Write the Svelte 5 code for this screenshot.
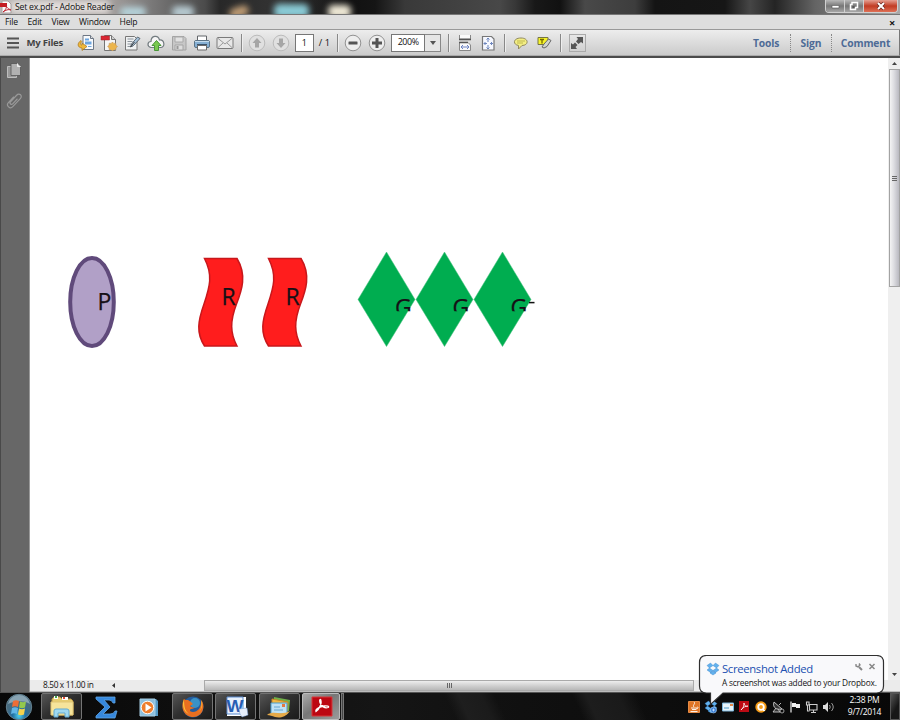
<script>
  const menus = [['File', 22.5], ['Edit', 24], ['View', 27.5], ['Window', 40.5], ['Help', 24]];
  const fileTools = ['open', 'create', 'edit', 'cloud', 'save', 'print', 'mail'];
  const tasks = [
    { icon: 'explorer', on: true }, { icon: 'sigma' }, { icon: 'media' },
    { icon: 'firefox', on: true }, { icon: 'word', on: true },
    { icon: 'live', on: true }, { icon: 'adobe', on: true, active: true }
  ];
  const tray = ['java', 'dropbox', 'mail', 'adobe', 'avast', 'dish', 'flag', 'net', 'sound'];
</script>

{#snippet pdfMark(color)}
  <path d="M4 15c3-2 6-8 5-11-.5-2-2-1-1 2 1 4 5 6 8 5 2-1-1-2-4-1.500-4 .6-9 3-8 5.500z" fill="none" stroke={color} stroke-width="1.300" />
{/snippet}

{#snippet dropMark()}
  <g stroke="#3b87cb" stroke-width=".4" fill="#62b1ee">
    <path d="M1 3.500 4.500 1 7 3.500 3.500 6zM13 3.500 9.500 1 7 3.500 10.500 6zM1 8l2.500-2L7 8.500 4.500 10.500zM13 8l-2.500-2L7 8.500l2.500 2zM4 11l3-2 3 2-3 2z" />
  </g>
{/snippet}

<div class="screen">
  <header class="title">
    <i class="glow a"></i><i class="glow b"></i><i class="glow c"></i><i class="glow d"></i><i class="glow e"></i><i class="glow f"></i>
    <svg width="12" height="14" viewBox="0 0 12 14">
      <path d="M2 1h6l3 3v9H2z" fill="#fafafa" stroke="#a8a0a0" />
      <path d="M0 3h7v4H0z" fill="#c51c22" />
      <path d="M3 12c4-3 4-7 3-8 0 4 3 5 5 6-3-1-5 0-8 2z" fill="none" stroke="#bd2430" />
    </svg>
    <span class="caption">Set ex.pdf - Adobe Reader</span>
    <div class="winbtns">
      <span><svg width="9" height="8"><path d="M1 3.500h7v2.500h-7z" fill="#fff" stroke="#555" stroke-width=".6" /></svg></span>
      <span><svg width="10" height="10"><path d="M3 1.500h5.500v5h-2v2H1.500v-5H3z" fill="none" stroke="#fff" stroke-width="1.500" /><path d="M3.500 5h2v2h-2z" fill="#555" /></svg></span>
      <span class="close"><svg width="10" height="9"><path d="m2 1 6 6M8 1 2 7" stroke="#6a2620" stroke-width="3.400" /><path d="m2 1 6 6M8 1 2 7" stroke="#fff" stroke-width="2" /></svg></span>
    </div>
  </header>

  <nav class="menu">
    {#each menus as [m, w]}<span style="width:{w}px">{m}</span>{/each}
    <b>×</b>
  </nav>

  <div class="toolbar">
    <span class="cell burger"><svg width="12" height="12"><path d="M0 1.500h12M0 6h12M0 10.500h12" stroke="#555" stroke-width="2" /></svg></span>
    <strong class="files">My Files</strong>
    {#each fileTools as t}
      <span class="cell">
        <svg width="18" height="18" viewBox="0 0 18 18">
          {#if t === 'open'}
            <path d="M6 1.500h7.500l3 3v11H6z" fill="#f8fafc" stroke="#6d7785" /><path d="M13.500 1.500v3h3" fill="#ddd" stroke="#6d7785" />
            <path d="M8 4.500h4v2H8zM8 7.500h6.500v3H8zM11 12h3.500v1H11z" fill="#6ca5df" />
            <path d="M4 6.500C0 9 0 13.500 5 14v2.500l5-4-5-3.500v2c-2 0-2-2 0-3.500z" fill="#eeb83b" stroke="#a8731a" stroke-width=".7" />
          {:else if t === 'create'}
            <path d="M4.500 1.500h7l4 4v11h-11z" fill="#f5f5f5" stroke="#747474" /><path d="M11.500 1.500v4h4" fill="#d0d0d0" stroke="#747474" />
            <path d="M1 2h8.500v4H1z" fill="#da2733" stroke="#9d2028" stroke-width=".5" />
            <path d="m12.500 8 1.200 1.400 2-.2.2 2 1.600 1.300-1.500 1.300-.2 2-2-.1-1.300 1.300-1.300-1.300-2 .1-.1-2L7.600 12.500l1.500-1.300.1-2 2 .2z" fill="#ecb54c" stroke="#c2955a" stroke-width=".6" />
          {:else if t === 'edit'}
            <path d="M2.500 2.500h9l2.500 2.500v11H2.500z" fill="#eff1f2" stroke="#777" /><path d="M4.500 5h6M4.500 7.500h5M4.500 10h4M4.500 12.500h5" stroke="#8b939b" />
            <path d="m7.500 13 1-3 6-7 2.500 1.500-6.500 7z" fill="#a6c2da" stroke="#505c68" stroke-width=".9" /><path d="m7.500 13 4-5" stroke="#444" />
          {:else if t === 'cloud'}
            <path d="M4 13.500C-.5 12.500 .5 7.500 4 7.500 4 1.500 11 .5 12.500 6c5-.5 6 7 1.500 7.500z" fill="#f6f6f6" stroke="#737c80" stroke-width="1.200" />
            <path d="m9.500 6.500 4.500 5h-2.500v5h-4v-5H5z" fill="#79c94e" stroke="#499638" />
          {:else if t === 'save'}
            <path d="M2.500 2.500H14l2 2v11.500H2.500z" fill="#c7c7c7" stroke="#a3a3a3" /><path d="M5 3h8v5H5z" fill="#e2e2e2" stroke="#aaa" /><path d="M5 11h8v5H5z" fill="#ddd" stroke="#a5a5a5" /><path d="M6.500 12h2v3h-2z" fill="#999" />
          {:else if t === 'print'}
            <path d="M4.500 2h9v5h-9z" fill="#fff" stroke="#63666a" /><rect x="1.500" y="6.500" width="15" height="7" rx="1.500" fill="#86b0d4" stroke="#5b7386" /><path d="M2 7.500h14" stroke="#c6dcec" />
            <path d="M4 10h10v1.500H4z" fill="#3c536a" /><path d="M4.500 11.500h9V16h-9z" fill="#fff" stroke="#6a6a6a" />
          {:else}
            <rect x="1" y="3.500" width="16" height="11" rx="1" fill="#e7e7e7" stroke="#7a7a7a" /><path d="m1.500 4 7.500 6 7.500-6M1.500 14l5.500-5M16.500 14 11 9" fill="none" stroke="#9a9a9a" />
          {/if}
        </svg>
      </span>
    {/each}
    <i class="sep first"></i>
    {#each [0, 180] as angle}
      <span class="cell"><svg width="18" height="18"><circle cx="9" cy="9" r="7.800" fill="#e0e0e0" stroke="#bbb" /><path d="m9 4 4.500 5H11v4.500H7V9H4.500z" fill="#a6a6a6" transform="rotate({angle} 9 9)" /></svg></span>
    {/each}
    <span class="box page">1</span><span class="of">/ 1</span>
    <i class="sep second"></i>
    <span class="cell"><svg width="18" height="18"><circle cx="9" cy="9" r="7.800" fill="#eee" stroke="#929292" /><rect x="4.500" y="7.500" width="9" height="3" rx=".5" fill="#555" /></svg></span>
    <span class="cell"><svg width="18" height="18"><circle cx="9" cy="9" r="7.800" fill="#eee" stroke="#929292" /><path d="M7.500 4h3v3.500H14v3h-3.500V14h-3v-3.500H4v-3h3.500z" fill="#555" /></svg></span>
    <span class="box zoom">200%</span><span class="drop"><svg width="6" height="4"><path d="M0 0h6L3 4z" fill="#555" /></svg></span>
    <i class="sep third"></i>
    <span class="cell"><svg width="16" height="16"><path d="M2.500 0v4h11V0" fill="#fafafa" stroke="#888" /><path d="M2.500 15.500v-8h8.500l2.500 2.500v5.500z" fill="#fafafa" stroke="#888" /><path d="M2 4.500h12M2 7.500h9" stroke="#555" stroke-width="1.300" /><path d="m6 10-2 2 2 2M10 10l2 2-2 2M4 12h8" fill="none" stroke="#6d83c4" /></svg></span>
    <span class="cell"><svg width="16" height="16"><path d="M2.500 1.500h9l2.500 2.500v11H2.500z" fill="#f6f8ff" stroke="#777" stroke-width="1.200" /><path d="M8 3v4m0 3v4M4 8.500h3m3 0h3M6.500 4.500 8 3l1.500 1.500M6.500 12.500 8 14l1.500-1.500M5.500 7 4 8.500 5.500 10M11 7l1.500 1.500L11 10" fill="none" stroke="#6d86bd" /></svg></span>
    <i class="sep fourth"></i>
    <span class="cell"><svg width="16" height="16"><path d="M8 3c8 0 8 7.500 1 7.500L5.500 14v-3.500C-.500 9.500 0 3 8 3z" fill="#f3ee83" stroke="#918a60" /><path d="M4 6h8M4 8h6" stroke="#c0b951" /></svg></span>
    <span class="cell"><svg width="16" height="16"><path d="M2 2.500h10v7H2z" fill="#f6f329" stroke="#777643" /><path d="M4 4.500h4M6 4.500v4" stroke="#736900" stroke-width="1.300" /><path d="m6 12 2-3 4.500-5 2.500 1.500-4 6-3 1.500z" fill="#d1d6cd" stroke="#666" /></svg></span>
    <i class="sep fifth"></i>
    <span class="full"><svg width="16" height="16"><path d="M7.500 2h6.500v6.500L12 7 9.500 9 7 6.500 9 4zM2 8l2 1.500 2-2L8.500 10l-2 2L8 14H2z" fill="#555" /></svg></span>
    <div class="links"><b>Tools</b><b>Sign</b><b>Comment</b></div>
  </div>

  <main class="body">
    <aside class="side">
      <svg width="16" height="18"><path d="M1.500 4.500h9v11h-9z" fill="#999" stroke="#bdbdbd" /><path d="M5 1.500h6.500l3 3v9H5z" fill="#b1b1b1" stroke="#555" stroke-width=".8" /><path d="M11.500 1.500v3h3" fill="#ddd" stroke="#eee" /></svg>
      <svg width="16" height="18"><g transform="rotate(43 8 9)" fill="none" stroke="#999" stroke-width="1.200"><path d="M5 6v8c0 4 6 4 6 0V3c0-4-5-4-5 0v9c0 2 3 2 3 0V5" /></g></svg>
    </aside>
    <section class="document">
      <div class="row">
        <svg class="sheet" width="858" height="622" viewBox="30 58 858 622">
          <ellipse cx="92" cy="302" rx="21.800" ry="44" fill="#b1a0c7" stroke="#604a7b" stroke-width="4" />
          {#each [0, 64] as dx}
            <path transform="translate({dx} 0)" d="M204.500 258.500H237C247 275 242 290 236.500 304 230 321 230 333 237 346H204.500C196 333 198 321 204 304 210 286 213 275 204.500 258.500z" fill="#ff1d1d" stroke="#c8171b" stroke-width="1.500" />
            <text x={221.500 + dx} y="305">R</text>
          {/each}
          <text x="97.500" y="310">P</text>
          <clipPath id="line"><path d="M350 290h200v21.300H350z" /></clipPath>
          {#each [0, 58, 116] as dx}
            <path transform="translate({dx} 0)" d="m386.500 252 28.500 47.500-28.500 47-28.500-47z" fill="#00ad50" stroke="#42c07c" stroke-width=".5" />
          {/each}
          <g clip-path="url(#line)">
            {#each [395, 452.500, 510.500] as x}<text {x} y="315.500">G</text>{/each}
          </g>
          <path d="M529 302.600h5.500" stroke="#111" stroke-width="1.500" />
        </svg>
        <div class="vscroll">
          <span class="arrow"><svg width="5" height="3"><path d="M0 3h5L2.500 0z" fill="#444" /></svg></span>
          <div class="vthumb"><i></i><i></i><i></i></div>
          <span class="arrow bottom"><svg width="5" height="3"><path d="M0 0h5L2.500 3z" fill="#444" /></svg></span>
        </div>
      </div>
      <footer class="hscroll">
        <span class="size">8.50 x 11.00 in</span>
        <span class="left"><svg width="3" height="5"><path d="M3 0v5L0 2.500z" fill="#333" /></svg></span>
        <div class="hthumb"><i></i><i></i><i></i></div>
      </footer>
    </section>
  </main>

  <div class="taskbar">
    <div class="start">
      <svg width="28" height="28">
        <defs><radialGradient id="orb" cx=".5" cy=".85"><stop offset="0" stop-color="#4fd1ed" /><stop offset=".5" stop-color="#216fa3" /><stop offset="1" stop-color="#466b80" /></radialGradient></defs>
        <circle cx="14" cy="14" r="12.700" fill="url(#orb)" stroke="#63808f" /><path d="M3 11C6-1 22-1 25 11c-7-4-15-3-22 0z" fill="#c9dce4" opacity=".5" />
        <path d="M8 8c2-1 4-1 6 0l-1 6c-2-1-4-1-6 0z" fill="#ed6e37" /><path d="M15 8.500c2 1 4 1 6 0l-1 6c-2 1-4 1-6 0z" fill="#94c94c" /><path d="M7 15c2-1 4-1 6 0l-1 6c-2-1-4-1-6 0z" fill="#61b5e6" /><path d="M14 15.500c2 1 4 1 6 0l-1 6c-2 1-4 1-6 0z" fill="#f5d24d" />
      </svg>
    </div>
    {#each tasks as t}
      <div class="task" class:on={t.on} class:active={t.active}>
        <svg width="26" height="24" viewBox="0 0 26 24">
          {#if t.icon === 'explorer'}
            <path d="M3 4 5 2h6l2 2h9l2 2v14H3z" fill="#e7cd70" stroke="#b69343" /><path d="M5 1h4v3H5zM13 2h6v3h-6z" fill="#fff" /><path d="M6 1h2v2H6z" fill="#42a651" /><path d="M14 2h2v2h-2z" fill="#e54b33" />
            <path d="M2 7h22v13H2z" fill="#f6e49b" stroke="#e0c676" /><path d="M5 22v-6q0-2 2-2h11q2 0 2 2v6h-4v-4H9v4z" fill="#9fd9f1" stroke="#62a9cf" />
          {:else if t.icon === 'sigma'}
            <path d="M3 2h19v6h-2q-1-3-4-3h-5l6 7-7 7h7q4 0 5-3h2l-2 7H3v-2l9-9-9-8z" fill="#3688dd" stroke="#5da4e6" stroke-width=".8" />
          {:else if t.icon === 'media'}
            <path d="M5 4h15l2 2v15H5z" fill="#5299c6" /><path d="M4 4h15v17H4z" fill="#8dc0de" stroke="#a8cfe5" /><circle cx="11.500" cy="12.500" r="6.300" fill="#ee7e2d" stroke="#fff" /><path d="m9.500 8.500 6 4-6 4z" fill="#fff" />
          {:else if t.icon === 'firefox'}
            <circle cx="14" cy="12" r="10.500" fill="#245c9d" /><circle cx="16" cy="8" r="5" fill="#3a92c6" />
            <path transform="translate(1 0)" d="M4 4C2 8 2 12 3 15c3 8 14 10 19 2 2-4 2-9-1-12 1 7-3 12-8 12-3 0-4-2-2-3 2 0 3-1 4-2-2 1-4 0-5-1l3-2-2-2-3-2c-2 0-3 0-4-1z" fill="#e96f20" /><path d="M5 4c0 8 1 12 5 15-5-2-6-7-6-11zM22 5c3 6 0 11-4 13 5-3 5-8 4-13z" fill="#fbc53c" />
          {:else if t.icon === 'word'}
            <path d="M4 2h19v19H4z" fill="#fff" /><path d="M4 2h16v17H4z" fill="#e8f1fd" stroke="#5b8bd0" /><text x="3.500" y="17" class="w" textLength="17" lengthAdjust="spacingAndGlyphs">W</text><path d="m16 14 8-1 1 7-6 2-2-3z" fill="#e7effb" stroke="#7496cb" stroke-width=".5" />
          {:else if t.icon === 'live'}
            <path d="m8 2 16 3-1 11-16-2z" fill="#70b04a" /><path d="m6 4 16 3-1 11-15-2z" fill="#f1b842" stroke="#c88825" /><path d="M5 8h16v11H5z" fill="#bfe2f5" stroke="#4b9dcb" /><path d="M16 9h3v3h-3z" fill="#e37942" /><path d="M8 12h6M8 15h9" stroke="#67a6ce" /><path d="M1 20c6-5 14 1 23-4-5 7-11 7-15 6-3-1-5-2-8-2z" fill="#e6aa48" />
          {:else}
            <path d="M4 2h20v19H4z" fill="#bc0712" stroke="#d7383b" /><g transform="translate(4 1.500)">{@render pdfMark('#fff')}</g>
          {/if}
        </svg>
      </div>
    {/each}
    <i class="stack"></i>
    <div class="tray">
      {#each tray as t}
        <svg width="14" height="14" viewBox="0 0 14 14">
          {#if t === 'java'}
            <path d="M1.500 1.500h11v11h-11z" fill="#df7425" stroke="#e68b45" /><path d="M7 2c2 2-2 3 0 5M4 8h6M5 9.500h4M3.500 11.500h7M10 7c2 0 1 2-1 2" fill="none" stroke="#fff" stroke-width=".9" />
          {:else if t === 'dropbox'}
            {@render dropMark()}<circle cx="9.500" cy="10" r="3" fill="#367bd4" stroke="#b7daf5" stroke-width=".6" /><path d="M8 10h3M9.500 8.500v3" fill="none" stroke="#dceeff" stroke-width=".7" />
          {:else if t === 'mail'}
            <path d="M1.500 3h11v8h-11z" fill="#e9f5fb" stroke="#7cb6dc" /><path d="M9 4h3v2H9z" fill="#e28748" /><path d="M3 8h5" stroke="#4c9bca" />
          {:else if t === 'adobe'}
            <path d="M2 1h10v11H2z" fill="#bd0b14" /><path d="M4 10c3-2 3-6 3-7 0 3 3 4 4 3-2 0-5 1-7 4z" fill="none" stroke="#fff" stroke-width=".8" />
          {:else if t === 'avast'}
            <circle cx="7" cy="7" r="5.700" fill="#f59c17" /><circle cx="7" cy="7" r="2.800" fill="none" stroke="#fff" stroke-width="1.800" /><path d="M9.600 7v3.500H11" fill="none" stroke="#fff" stroke-width="1.200" />
          {:else if t === 'dish'}
            <path d="M3 2c-2 6 3 8 8 7zM5 8l-3 4h7L7 9M8 5l2-2" fill="#333" stroke="#ccc" stroke-width=".9" /><circle cx="11" cy="11" r="2" fill="none" stroke="#bbb" stroke-width=".8" />
          {:else if t === 'flag'}
            <path d="M3 1.500v11" stroke="#ddd" stroke-width="1.300" /><path d="M4 3h4v1h4v4H8V7H4z" fill="#eee" />
          {:else if t === 'net'}
            <path d="M4.500 4.500h7.500v5.500H4.500zM8.500 10v2M6 12.500h5M1.500 2h2.500v3H1.500zM2.500 5v6h2" fill="none" stroke="#ccc" stroke-width="1.100" />
          {:else}
            <path d="M2 5h2l3-3v10L4 9H2z" fill="#ddd" /><path d="M8.500 5q1.500 2 0 4M10.500 3q3.500 4 0 8" fill="none" stroke="#999" />
          {/if}
        </svg>
      {/each}
    </div>
    <div class="clock"><span>2:38 PM</span><span>9/7/2014</span></div>
    <i class="desktop"></i>
  </div>

  <div class="toast">
    <svg class="bubble" width="188" height="51"><path d="M8.500.5h170q7 0 7 7V31q0 7-7 7H25L12.500 49.500V38h-4q-7 0-7-7V7.500q0-7 7-7z" fill="#f9f9fb" stroke="#303030" stroke-width="1.200" /></svg>
    <div class="head"><svg width="14" height="14">{@render dropMark()}</svg><span>Screenshot Added</span>
      <svg width="24" height="10"><path d="m5 5 3 3" stroke="#888" stroke-width="2" /><path d="M2 2v2l2 1 2-2-1-1.500" fill="none" stroke="#888" stroke-width="1.400" /><path d="m15.500 2 5 5m0-5-5 5" stroke="#888" stroke-width="1.500" /></svg>
    </div>
    <p>A screenshot was added to your Dropbox.</p>
  </div>
</div>

<style>
  :global(body) { margin: 0; overflow: hidden; }
  .screen, .screen * { box-sizing: border-box; }
  .screen { position: relative; width: 900px; height: 720px; display: flex; flex-direction: column; overflow: hidden; font: 8px/1 "Open Sans", "Noto Sans", sans-serif; color: #111; background: #fff; }
  svg { display: block; flex: none; }
  .title { position: relative; height: 15px; flex: none; display: flex; align-items: center; overflow: hidden; background: linear-gradient(90deg, #b9b6b4 0, #aaa5a3 105px, #7b7a7a 150px, #4b4b4b 205px, #282828 220px, #343434 280px, #111 350px, #151515 375px, #393939 405px, #484848 500px, #383838 515px, #181818 535px, #111 560px, #494949 585px, #3d3d3d 635px, #141414 655px, #161616 725px, #464646 750px, #242424 775px, #646464 815px, #aaa 900px); border-bottom: 1px solid #777; }
  .glow { position: absolute; filter: blur(3px); border-radius: 5px; }
  .a { left: 10px; top: 1px; width: 100px; height: 12px; background: #e4dfdd; }
  .b { left: 120px; top: 7px; width: 26px; height: 10px; background: #b7d4dc; }
  .c { left: 172px; top: 6px; width: 22px; height: 12px; background: #b7cad1; }
  .d { left: 229px; top: 7px; width: 20px; height: 10px; background: #c4a077; transform: rotate(-18deg); }
  .e { left: 274px; top: 4px; width: 35px; height: 14px; background: #8acbd6; }
  .f { left: 328px; top: 5px; width: 23px; height: 13px; background: #f1ebd8; }
  .title > svg, .caption { position: relative; }
  .caption { margin-left: 3px; font-size: 8.700px; white-space: nowrap; letter-spacing: -.23px; }
  .winbtns { position: relative; align-self: flex-start; margin-left: auto; margin-right: 2px; display: flex; height: 13px; border: 1px solid #d0d0d0; border-top: 0; border-radius: 0 0 4px 4px; overflow: hidden; }
  .winbtns span { width: 19px; display: flex; justify-content: center; align-items: center; background: linear-gradient(#b8b8b8, #777 50%, #a6a6a6); border-right: 1px solid #d0d0d0; }
  .winbtns .close { width: 33px; border: 0; background: linear-gradient(#e6a092, #c13c24 50%, #df7056); }
  .menu { height: 15px; flex: none; display: flex; align-items: center; padding-left: 5px; padding-right: 5px; background: #dedede; border-bottom: 1px solid #999; font-size: 8.600px; letter-spacing: -.2px; }
  .menu span { white-space: nowrap; flex: none; }
  .menu b { margin-left: auto; font-size: 11px; }
  .toolbar { height: 26px; flex: none; display: flex; align-items: center; background: linear-gradient(#ededed, #cbcbcb); border-right: 1px solid #777; border-bottom: 1px solid #aaa; }
  .cell { flex: none; width: 23.200px; display: flex; justify-content: center; }
  .burger { width: 26px; }
  .files { width: 48.400px; flex: none; padding-left: .5px; font-size: 9.600px; color: #444; white-space: nowrap; letter-spacing: -.25px; }
  .sep { flex: none; width: 1px; height: 18px; background: #888; box-shadow: 1px 0 #eee; }
  .first { margin: 0 4px 0 4.200px; }
  .box { flex: none; height: 18px; display: flex; align-items: center; justify-content: center; background: #fff; border: 1px solid #777; }
  .page { width: 19px; margin-left: 2.600px; font-size: 9px; line-height: 16px; }
  .of { width: 12px; margin-left: 5px; font-size: 9.300px; white-space: nowrap; }
  .second { margin-left: 6px; margin-right: 4px; }
  .zoom { width: 34px; margin-left: 3px; font-size: 8.900px; letter-spacing: -.35px; }
  .drop { flex: none; width: 16px; height: 18px; border: 1px solid #888; border-left: 0; display: flex; align-items: center; justify-content: center; background: #e6e6e6; }
  .third { margin-left: 7px; margin-right: 4px; }
  .fourth { margin-left: 4.500px; margin-right: 4px; }
  .fifth { margin-left: 4.500px; margin-right: 8px; }
  .full { flex: none; width: 17px; height: 18px; border: 1px solid #aaa; display: flex; align-items: center; justify-content: center; }
  .links { margin-left: auto; display: flex; color: #4e6b96; font-size: 10.300px; line-height: 18px; letter-spacing: -.15px; }
  .links b { text-align: center; width: 41px; border-left: 1px dotted #888; }
  .links b:first-child { border: 0; width: 48px; }
  .links b:last-child { width: 68px; }
  .body { display: flex; height: 636px; flex: none; border-top: 2px solid #4b4b4b; background: #fff; }
  .side { width: 30px; flex: none; background: #676767; border-left: 1px solid #494949; border-right: 1px solid #999; display: flex; flex-direction: column; gap: 12px; padding: 4px 0 0 5px; }
  .document { flex: 1; display: flex; flex-direction: column; }
  .row { display: flex; height: 622px; }
  .sheet { background: #fff; }
  .sheet text { font: 23px "Open Sans", "Noto Sans", sans-serif; fill: #161016; stroke: #161016; stroke-width: .25px; }
  .vscroll { width: 12px; background: #efefef; display: flex; flex-direction: column; }
  .arrow { height: 11px; display: flex; align-items: center; justify-content: center; }
  .bottom { margin-top: auto; }
  .vthumb { margin-left: 1px; width: 11px; height: 218px; border: 1px solid #a3a3a3; background: linear-gradient(90deg, #f4f4f4, #dcdce0 45%, #b9b9c0); display: flex; flex-direction: column; align-items: center; justify-content: center; gap: 1px; }
  .vthumb i { width: 5px; height: 1px; background: #666; }
  .hscroll { height: 12px; display: flex; align-items: center; background: #ebebeb; border-bottom: 1px solid #bcbcbc; }
  .size { width: 80px; padding-left: 13px; font-size: 8.300px; letter-spacing: -.34px; white-space: nowrap; }
  .left { width: 94px; padding-left: 2px; }
  .hthumb { width: 490px; height: 11px; border: 1px solid #aaa; background: linear-gradient(#eee, #ccc 60%, #b8b8b8); display: flex; align-items: center; justify-content: center; gap: 1px; }
  .hthumb i { width: 1px; height: 5px; background: #666; }
  .taskbar { flex: 1; min-height: 0; display: flex; align-items: center; background: linear-gradient(65deg, transparent 50%, #1e1e1e 51.500%, #1b1b1b 54%, transparent 55.500%, transparent 64%, #1d1d1d 65.500%, #1a1a1a 69%, transparent 71%), linear-gradient(90deg, #080808, #151515 42%, #101010 58%, #080808); border-top: 1px solid #555; }
  .start { width: 41px; padding-left: 5px; flex: none; }
  .task { flex: none; width: 42px; height: 27px; display: flex; align-items: center; justify-content: center; margin-right: 1.500px; }
  .on { border: 1px solid #747474; border-radius: 2px; background: linear-gradient(145deg, #555, #303030 45%, #1b1b1b); width: 41px; margin-right: 2.500px; }
  .active { width: 38px; background: linear-gradient(145deg, #aaa, #777 45%, #9b9b9b); border-color: #bbb; margin-right: 1px; }
  .w { font: bold 17px "Liberation Sans", sans-serif; fill: #275eb3; }
  .stack { width: 3px; height: 27px; border: 1px solid #777; background: #444; }
  .tray { margin-left: auto; display: flex; gap: 2.800px; width: 152px; flex: none; }
  .clock { width: 51px; flex: none; display: flex; flex-direction: column; align-items: center; color: #fff; font-size: 8.500px; gap: 3.500px; letter-spacing: -.25px; }
  .desktop { width: 10px; height: 27px; border: 1px solid #555; background: linear-gradient(120deg, #555, #171717 60%); }
  .toast { position: absolute; left: 698px; top: 655px; width: 188px; height: 51px; }
  .bubble { position: absolute; inset: 0; }
  .head { position: relative; display: flex; padding: 7px 0 0 8px; }
  .head span { margin-left: 2px; width: 132px; color: #204fb0; font-size: 11.300px; line-height: 13px; letter-spacing: -.33px; white-space: nowrap; }
  .toast p { position: relative; margin: 1.500px 0 0 24px; font-size: 8.300px; line-height: 9px; letter-spacing: -.19px; white-space: nowrap; }
</style>
